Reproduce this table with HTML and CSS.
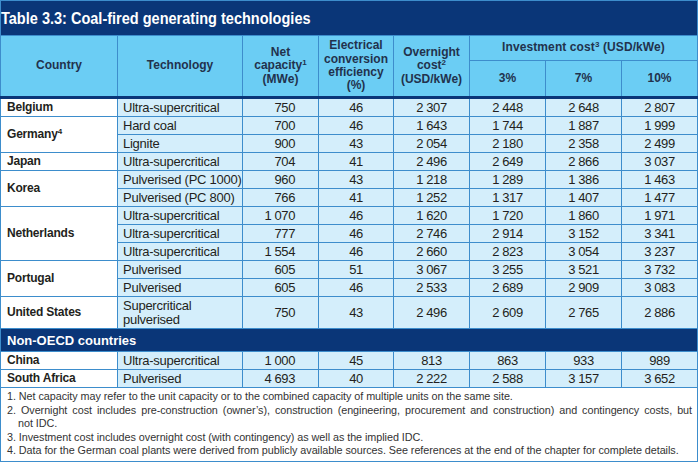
FILE: index.html
```html
<!DOCTYPE html>
<html lang="en">
<head>
<meta charset="utf-8">
<title>Table 3.3: Coal-fired generating technologies</title>
<link rel="stylesheet" href="styles.css">
</head>
<body>
<table class="tbl">
  <colgroup>
    <col class="c-country"><col class="c-tech"><col class="c-cap"><col class="c-eff">
    <col class="c-ovn"><col class="c-inv"><col class="c-inv"><col class="c-inv10">
  </colgroup>
  <thead>
    <tr class="title-row">
      <th colspan="8" class="title"><span class="title-text">Table 3.3: Coal-fired generating technologies</span></th>
    </tr>
    <tr class="head1">
      <th rowspan="2" class="hb">Country</th>
      <th rowspan="2" class="hb">Technology</th>
      <th rowspan="2" class="hb">Net<br>capacity<sup>1</sup><br>(MWe)</th>
      <th rowspan="2" class="hb">Electrical<br>conversion<br>efficiency<br>(%)</th>
      <th rowspan="2" class="hb">Overnight<br>cost<sup>2</sup><br>(USD/kWe)</th>
      <th colspan="3" class="inv">Investment cost<sup>3</sup> (USD/kWe)</th>
    </tr>
    <tr class="head2">
      <th class="hb">3%</th>
      <th class="hb">7%</th>
      <th class="hb">10%</th>
    </tr>
  </thead>
  <tbody>
    <tr class="r">
      <td class="country">Belgium</td><td class="tech">Ultra-supercritical</td>
      <td class="num cap">750</td><td class="num">46</td><td class="num">2 307</td><td class="num">2 448</td><td class="num">2 648</td><td class="num">2 807</td>
    </tr>
    <tr class="r">
      <td class="country" rowspan="2">Germany<sup>4</sup></td><td class="tech">Hard coal</td>
      <td class="num cap">700</td><td class="num">46</td><td class="num">1 643</td><td class="num">1 744</td><td class="num">1 887</td><td class="num">1 999</td>
    </tr>
    <tr class="r">
      <td class="tech">Lignite</td>
      <td class="num cap">900</td><td class="num">43</td><td class="num">2 054</td><td class="num">2 180</td><td class="num">2 358</td><td class="num">2 499</td>
    </tr>
    <tr class="r">
      <td class="country">Japan</td><td class="tech">Ultra-supercritical</td>
      <td class="num cap">704</td><td class="num">41</td><td class="num">2 496</td><td class="num">2 649</td><td class="num">2 866</td><td class="num">3 037</td>
    </tr>
    <tr class="r">
      <td class="country" rowspan="2">Korea</td><td class="tech">Pulverised (PC 1000)</td>
      <td class="num cap">960</td><td class="num">43</td><td class="num">1 218</td><td class="num">1 289</td><td class="num">1 386</td><td class="num">1 463</td>
    </tr>
    <tr class="r">
      <td class="tech">Pulverised (PC 800)</td>
      <td class="num cap">766</td><td class="num">41</td><td class="num">1 252</td><td class="num">1 317</td><td class="num">1 407</td><td class="num">1 477</td>
    </tr>
    <tr class="r">
      <td class="country" rowspan="3">Netherlands</td><td class="tech">Ultra-supercritical</td>
      <td class="num cap">1 070</td><td class="num">46</td><td class="num">1 620</td><td class="num">1 720</td><td class="num">1 860</td><td class="num">1 971</td>
    </tr>
    <tr class="r">
      <td class="tech">Ultra-supercritical</td>
      <td class="num cap">777</td><td class="num">46</td><td class="num">2 746</td><td class="num">2 914</td><td class="num">3 152</td><td class="num">3 341</td>
    </tr>
    <tr class="r">
      <td class="tech">Ultra-supercritical</td>
      <td class="num cap">1 554</td><td class="num">46</td><td class="num">2 660</td><td class="num">2 823</td><td class="num">3 054</td><td class="num">3 237</td>
    </tr>
    <tr class="r">
      <td class="country" rowspan="2">Portugal</td><td class="tech">Pulverised</td>
      <td class="num cap">605</td><td class="num">51</td><td class="num">3 067</td><td class="num">3 255</td><td class="num">3 521</td><td class="num">3 732</td>
    </tr>
    <tr class="r">
      <td class="tech">Pulverised</td>
      <td class="num cap">605</td><td class="num">46</td><td class="num">2 533</td><td class="num">2 689</td><td class="num">2 909</td><td class="num">3 083</td>
    </tr>
    <tr class="r2">
      <td class="country">United States</td><td class="tech tech2">Supercritical<br>pulverised</td>
      <td class="num cap">750</td><td class="num">43</td><td class="num">2 496</td><td class="num">2 609</td><td class="num">2 765</td><td class="num">2 886</td>
    </tr>
    <tr class="band">
      <th colspan="8">Non-OECD countries</th>
    </tr>
    <tr class="r">
      <td class="country">China</td><td class="tech">Ultra-supercritical</td>
      <td class="num cap">1 000</td><td class="num">45</td><td class="num">813</td><td class="num">863</td><td class="num">933</td><td class="num">989</td>
    </tr>
    <tr class="r">
      <td class="country">South Africa</td><td class="tech">Pulverised</td>
      <td class="num cap">4 693</td><td class="num">40</td><td class="num">2 222</td><td class="num">2 588</td><td class="num">3 157</td><td class="num">3 652</td>
    </tr>
  </tbody>
  <tfoot>
    <tr>
      <td colspan="8" class="notes">
        <p>1. Net capacity may refer to the unit capacity or to the combined capacity of multiple units on the same site.</p>
        <p>2. Overnight cost includes pre-construction (owner’s), construction (engineering, procurement and construction) and contingency costs, but not&nbsp;IDC.</p>
        <p>3. Investment cost includes overnight cost (with contingency) as well as the implied IDC.</p>
        <p>4. Data for the German coal plants were derived from publicly available sources. See references at the end of the chapter for complete details.</p>
      </td>
    </tr>
  </tfoot>
</table>
</body>
</html>
```

FILE: styles.css
```css
body {
  margin: 0;
  background: #ffffff;
  font-family: "Liberation Sans", Arial, sans-serif;
  color: #231f20;
}

.tbl {
  border-collapse: collapse;
  table-layout: fixed;
  width: 698px;
  border: 1px solid #4a9bd6;
}

.c-country { width: 117px; }
.c-tech { width: 125px; }
.c-cap { width: 76px; }
.c-eff { width: 75px; }
.c-ovn { width: 76px; }
.c-inv { width: 76px; }
.c-inv10 { width: 76px; }

.tbl th,
.tbl td {
  border: 1px solid #3d8dcc;
  padding: 0;
}

sup {
  font-size: 8px;
  line-height: 0;
  vertical-align: 4px;
}

/* Title */
.title {
  background: #0a3678;
  color: #ffffff;
  height: 34px;
  text-align: left;
  padding-left: 7px;
  font-size: 16.5px;
  font-weight: bold;
  white-space: nowrap;
}

.title-text {
  display: inline-block;
  transform: scaleX(0.88);
  transform-origin: 0 50%;
}

/* Header */
.head1 th,
.head2 th {
  background: #6bcdf4;
  color: #22324d;
  font-size: 12px;
  font-weight: bold;
  line-height: 13.3px;
  text-align: center;
}

.head1 th { height: 24px; }
.head2 th { height: 35px; }
.inv { letter-spacing: 0.1px; }

.tbl .hb { border-bottom: 3px solid #0a3678; }

/* Body rows */
.r td { height: 17px; }
.r2 td { height: 31px; }

.country {
  background: #ffffff;
  font-size: 12px;
  font-weight: bold;
  letter-spacing: -0.2px;
  text-align: left;
  padding-left: 6px !important;
  line-height: 15px;
}

.tech {
  background: #d4eefb;
  font-size: 13px;
  line-height: 15px;
  letter-spacing: -0.25px;
  padding-left: 5px !important;
  white-space: nowrap;
}

.tech2 { line-height: 13.5px; }

.num {
  background: #d4eefb;
  font-size: 13px;
  line-height: 15px;
  text-align: center;
  letter-spacing: -0.4px;
}

.cap {
  text-align: right;
  padding-right: 23px !important;
}

/* Section band */
.band th {
  background: #0a3678;
  color: #ffffff;
  height: 22px;
  font-size: 13px;
  font-weight: bold;
  text-align: left;
  padding-left: 6px;
}

/* Footnotes */
.notes {
  background: #ffffff;
  font-size: 10.8px;
  line-height: 13.5px;
  color: #333333;
  padding: 2px 5px 3px 6px !important;
}

.notes p {
  margin: 0;
  padding-left: 11px;
  text-indent: -11px;
  text-align: justify;
  letter-spacing: -0.05px;
}
```
